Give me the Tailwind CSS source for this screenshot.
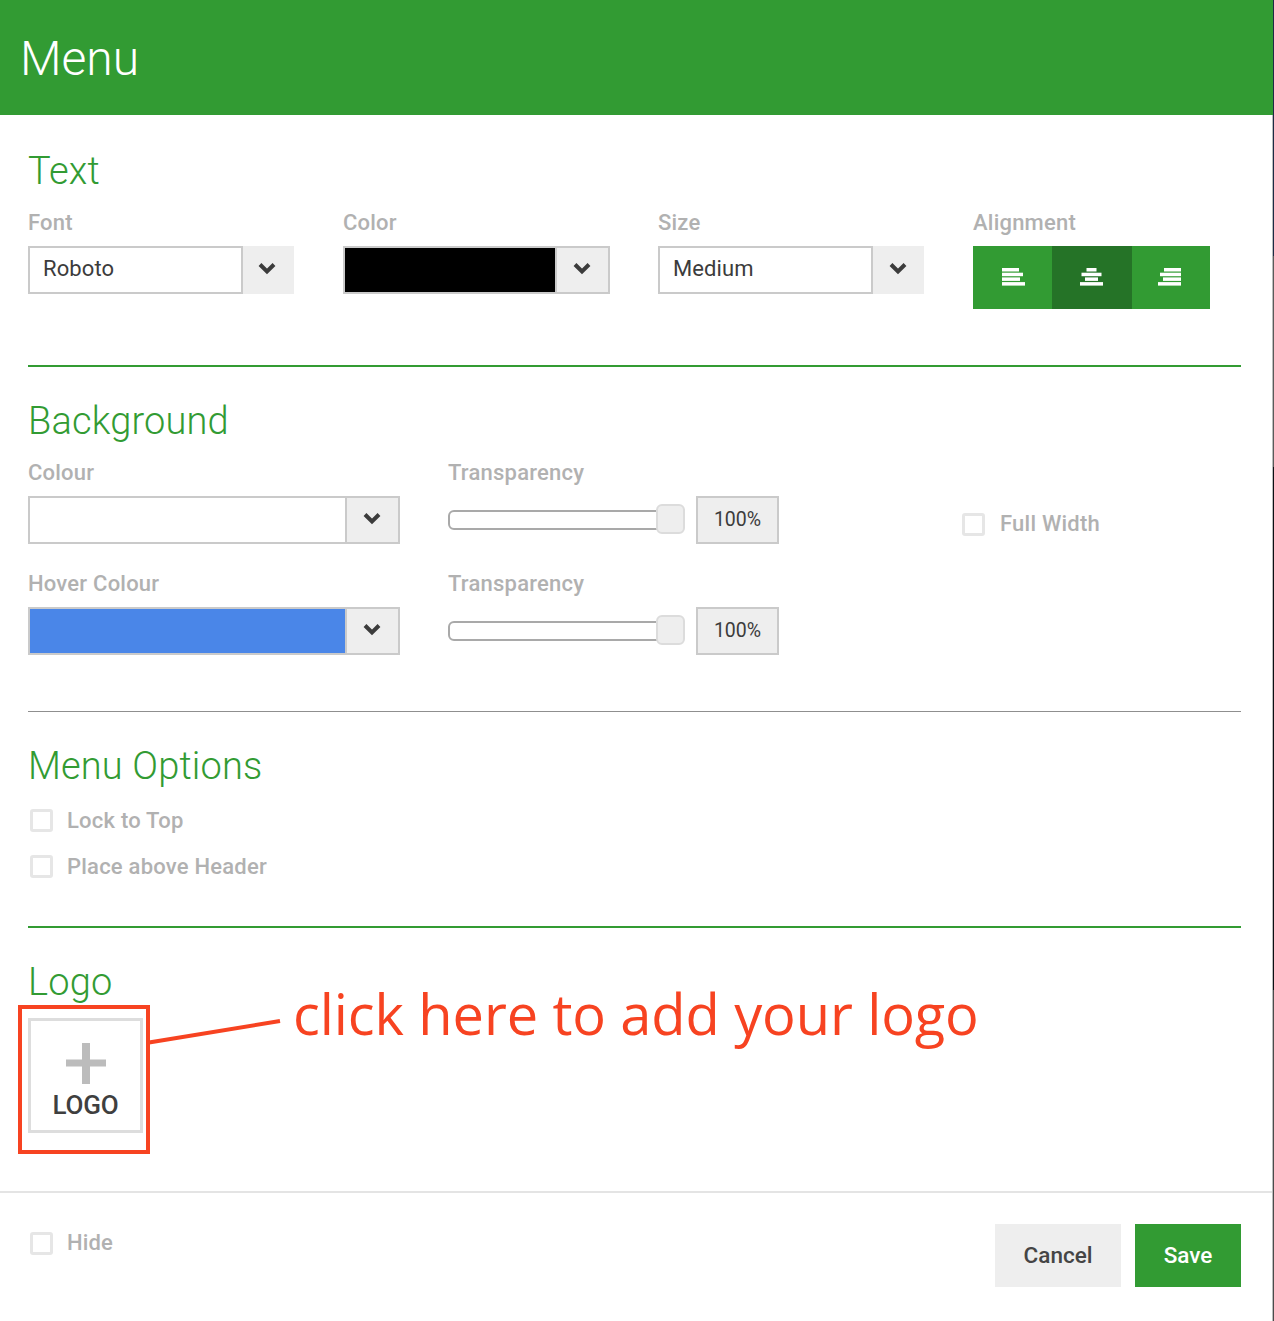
<!DOCTYPE html>
<html lang="en">
<head>
    <meta charset="UTF-8">
    <meta name="viewport" content="width=device-width, initial-scale=1.0">
    <title>Menu</title>
    <script src="https://cdn.jsdelivr.net/npm/@tailwindcss/browser@4"></script>
</head>
<body class="bg-white">
    <div class="relative w-[1274px] h-[1321px] overflow-hidden bg-white font-['Roboto',sans-serif] text-[#3c3c3c]">
        <header class="h-[115px] bg-[#329b33] pl-[20px] pt-[30px]">
            <h1 class="text-[48px] leading-[58px] font-light text-white">Menu</h1>
        </header>

        <div class="mx-[28px] w-[1213px]">
            <!-- Text -->
            <section class="h-[252px] border-b-2 border-[#329b33]">
                <h2 class="pt-[34px] h-[95px] text-[38px] leading-[44px] font-light tracking-[0.15px] text-[#329b33]">Text</h2>
                <div class="flex">
                    <div class="w-[315px]">
                        <label class="block h-[36px] text-[22px] leading-[26px] font-medium text-[#b1b1b1] tracking-[0.22px]">Font</label>
                        <div class="flex w-[266px] h-[48px]">
                            <div class="w-[215px] border-2 border-[#cacaca] pl-[13px] text-[22px] leading-[41px] tracking-[0.1px]">Roboto</div>
                            <div class="flex flex-1 items-center justify-center bg-[#eeeeee] pr-[3px]">
                                <svg class="w-[18px] h-[14px] mb-[5px]" viewBox="0 0 18 14"><path d="M2 3.5l7 7 7-7" fill="none" stroke="#3c3c3c" stroke-width="4"/></svg>
                            </div>
                        </div>
                    </div>
                    <div class="w-[315px]">
                        <label class="block h-[36px] text-[22px] leading-[26px] font-medium text-[#b1b1b1] tracking-[0.22px]">Color</label>
                        <div class="flex w-[267px] h-[48px] border-2 border-[#cacaca]">
                            <div class="w-[210px] bg-black"></div>
                            <div class="flex flex-1 items-center justify-center bg-[#eeeeee] border-l-2 border-[#cacaca] pr-[2px]">
                                <svg class="w-[18px] h-[14px] mb-[5px]" viewBox="0 0 18 14"><path d="M2 3.5l7 7 7-7" fill="none" stroke="#3c3c3c" stroke-width="4"/></svg>
                            </div>
                        </div>
                    </div>
                    <div class="w-[315px]">
                        <label class="block h-[36px] text-[22px] leading-[26px] font-medium text-[#b1b1b1] tracking-[0.22px]">Size</label>
                        <div class="flex w-[266px] h-[48px]">
                            <div class="w-[215px] border-2 border-[#cacaca] pl-[13px] text-[22px] leading-[41px] tracking-[0.1px]">Medium</div>
                            <div class="flex flex-1 items-center justify-center bg-[#eeeeee] pr-[1px]">
                                <svg class="w-[18px] h-[14px] mb-[5px]" viewBox="0 0 18 14"><path d="M2 3.5l7 7 7-7" fill="none" stroke="#3c3c3c" stroke-width="4"/></svg>
                            </div>
                        </div>
                    </div>
                    <div>
                        <label class="block h-[36px] text-[22px] leading-[26px] font-medium text-[#b1b1b1] tracking-[0.22px]">Alignment</label>
                        <div class="flex h-[63px] w-[237px] bg-[#329b33]">
                            <div class="flex w-[79px] items-center justify-center pl-[2px] pb-[2px]">
                                <svg class="w-[23px] h-[18px]" viewBox="0 0 23 18" fill="#fff"><rect width="17" height="3.5"/><rect y="4.7" width="21" height="3.5"/><rect y="9.4" width="18" height="3.5"/><rect y="14.1" width="23" height="3.5"/></svg>
                            </div>
                            <div class="flex w-[80px] items-center justify-center bg-[#257327] pr-[2px] pb-[2px]">
                                <svg class="w-[23px] h-[18px]" viewBox="0 0 23 18" fill="#fff"><rect x="6.5" width="10" height="3.5"/><rect x="1.5" y="4.7" width="20" height="3.5"/><rect x="5" y="9.4" width="13" height="3.5"/><rect y="14.1" width="23" height="3.5"/></svg>
                            </div>
                            <div class="flex w-[78px] items-center justify-center pr-[3px] pb-[2px]">
                                <svg class="w-[23px] h-[18px]" viewBox="0 0 23 18" fill="#fff"><rect x="6" width="17" height="3.5"/><rect x="2" y="4.7" width="21" height="3.5"/><rect x="5" y="9.4" width="18" height="3.5"/><rect y="14.1" width="23" height="3.5"/></svg>
                            </div>
                        </div>
                    </div>
                </div>
            </section>

            <!-- Background -->
            <section class="h-[345px] border-b border-[#8f8f8f]">
                <h2 class="pt-[32px] h-[93px] text-[38px] leading-[44px] font-light tracking-[0.15px] text-[#329b33]">Background</h2>
                <div class="flex h-[111px]">
                    <div class="w-[420px]">
                        <label class="block h-[36px] text-[22px] leading-[26px] font-medium text-[#b1b1b1] tracking-[0.22px]">Colour</label>
                        <div class="flex w-[372px] h-[48px] border-2 border-[#cacaca]">
                            <div class="w-[315px] bg-white"></div>
                            <div class="flex flex-1 items-center justify-center bg-[#eeeeee] border-l-2 border-[#cacaca] pr-[2px]">
                                <svg class="w-[18px] h-[14px] mb-[5px]" viewBox="0 0 18 14"><path d="M2 3.5l7 7 7-7" fill="none" stroke="#3c3c3c" stroke-width="4"/></svg>
                            </div>
                        </div>
                    </div>
                    <div class="w-[514px]">
                        <label class="block h-[36px] text-[22px] leading-[26px] font-medium text-[#b1b1b1] tracking-[0.22px]">Transparency</label>
                        <div class="flex h-[48px] items-center">
                            <div class="relative w-[237px] h-[20px] rounded-[6px] border-2 border-[#a9a9a9] bg-white">
                                <div class="absolute right-[-2px] top-[-8px] w-[29px] h-[30px] rounded-[6px] border-2 border-[#dcdcdc] bg-[#eeeeee]"></div>
                            </div>
                            <div class="ml-[11px] flex w-[83px] h-[48px] items-center justify-center border-2 border-[#cacaca] bg-[#eeeeee] text-[19.5px] pb-px">100%</div>
                        </div>
                    </div>
                    <div class="flex items-start h-[84px] pt-[49px]">
                        <span class="mt-[4px] block w-[23px] h-[23px] rounded-[3px] border-[3px] border-[#e6e6e6]"></span>
                        <span class="ml-[15px] text-[22px] leading-[30px] font-medium text-[#b1b1b1] tracking-[0.22px]">Full Width</span>
                    </div>
                </div>
                <div class="flex">
                    <div class="w-[420px]">
                        <label class="block h-[36px] text-[22px] leading-[26px] font-medium text-[#b1b1b1] tracking-[0.22px]">Hover Colour</label>
                        <div class="flex w-[372px] h-[48px] border-2 border-[#cacaca]">
                            <div class="w-[315px] bg-[#4a86e8]"></div>
                            <div class="flex flex-1 items-center justify-center bg-[#eeeeee] border-l-2 border-[#cacaca] pr-[2px]">
                                <svg class="w-[18px] h-[14px] mb-[5px]" viewBox="0 0 18 14"><path d="M2 3.5l7 7 7-7" fill="none" stroke="#3c3c3c" stroke-width="4"/></svg>
                            </div>
                        </div>
                    </div>
                    <div class="w-[514px]">
                        <label class="block h-[36px] text-[22px] leading-[26px] font-medium text-[#b1b1b1] tracking-[0.22px]">Transparency</label>
                        <div class="flex h-[48px] items-center">
                            <div class="relative w-[237px] h-[20px] rounded-[6px] border-2 border-[#a9a9a9] bg-white">
                                <div class="absolute right-[-2px] top-[-8px] w-[29px] h-[30px] rounded-[6px] border-2 border-[#dcdcdc] bg-[#eeeeee]"></div>
                            </div>
                            <div class="ml-[11px] flex w-[83px] h-[48px] items-center justify-center border-2 border-[#cacaca] bg-[#eeeeee] text-[19.5px] pb-px">100%</div>
                        </div>
                    </div>
                </div>
            </section>

            <!-- Menu Options -->
            <section class="h-[216px] border-b-2 border-[#329b33]">
                <h2 class="pt-[32px] h-[85px] text-[38px] leading-[44px] font-light tracking-[0.15px] text-[#329b33]">Menu Options</h2>
                <div class="flex h-[46px] items-center pl-[2px]">
                    <span class="block w-[23px] h-[23px] rounded-[3px] border-[3px] border-[#e6e6e6]"></span>
                    <span class="ml-[14px] text-[22px] font-medium text-[#b1b1b1] tracking-[0.22px]">Lock to Top</span>
                </div>
                <div class="flex h-[46px] items-center pl-[2px]">
                    <span class="block w-[23px] h-[23px] rounded-[3px] border-[3px] border-[#e6e6e6]"></span>
                    <span class="ml-[14px] text-[22px] font-medium text-[#b1b1b1] tracking-[0.22px]">Place above Header</span>
                </div>
            </section>

            <!-- Logo -->
            <section>
                <h2 class="pt-[32px] h-[90px] text-[38px] leading-[44px] font-light tracking-[0.15px] text-[#329b33]">Logo</h2>
                <div class="flex flex-col items-center w-[115px] h-[115px] border-[3px] border-[#dddddd] bg-white">
                    <svg class="mt-[22px] w-[40px] h-[41px]" viewBox="0 0 40 41" fill="#bcbcbc"><rect x="16" width="8" height="41"/><rect y="16.5" width="40" height="7"/></svg>
                    <span class="mt-[6px] text-[26px] leading-[30px] font-medium text-[#3f3f3f] tracking-[-0.2px]">LOGO</span>
                </div>
            </section>
        </div>

        <!-- Footer -->
        <footer class="absolute left-0 right-0 top-[1191px] h-[130px] border-t-2 border-[#e4e4e4]">
            <div class="flex items-start justify-between pl-[30px] pr-[33px]">
                <div class="flex items-start h-[46px] mt-[35px]">
                    <span class="mt-[4px] block w-[23px] h-[23px] rounded-[3px] border-[3px] border-[#e6e6e6]"></span>
                    <span class="ml-[14px] text-[22px] leading-[30px] font-medium text-[#b1b1b1] tracking-[0.1px]">Hide</span>
                </div>
                <div class="flex mt-[31px] gap-[14px]">
                    <button class="w-[126px] h-[63px] bg-[#eeeeee] text-[22.5px] font-medium text-[#454545]">Cancel</button>
                    <button class="w-[106px] h-[63px] bg-[#329b33] text-[22.5px] font-medium text-white">Save</button>
                </div>
            </div>
        </footer>

        <!-- Annotation over the logo -->
        <div class="absolute left-[18px] top-[1005px] w-[132px] h-[149px] border-[4px] border-[#f74321]"></div>
        <svg class="absolute left-[148px] top-[1015px] w-[134px] h-[32px]" viewBox="0 0 134 32"><path d="M1 27.5L132 6" stroke="#f74321" stroke-width="4" fill="none"/></svg>
        <div class="absolute left-[293px] top-[973px] text-[56px] leading-[80px] tracking-[-0.1px] whitespace-nowrap text-[#f74321] font-['Open_Sans',sans-serif]">click here to add your logo</div>

        <!-- Window edge of the captured screen -->
        <div class="absolute left-[1272px] top-[115px] bottom-0 w-px bg-[#bdbdbd]"></div>
        <div class="absolute right-0 top-0 bottom-0 flex w-px flex-col">
            <div class="h-[256px] bg-[#1d2a44]"></div>
            <div class="h-[211px] bg-[#5a5a5a]"></div>
            <div class="h-[523px] bg-[#0c0f14]"></div>
            <div class="flex-1 bg-[#4b4b4b]"></div>
        </div>
    </div>
</body>
</html>
